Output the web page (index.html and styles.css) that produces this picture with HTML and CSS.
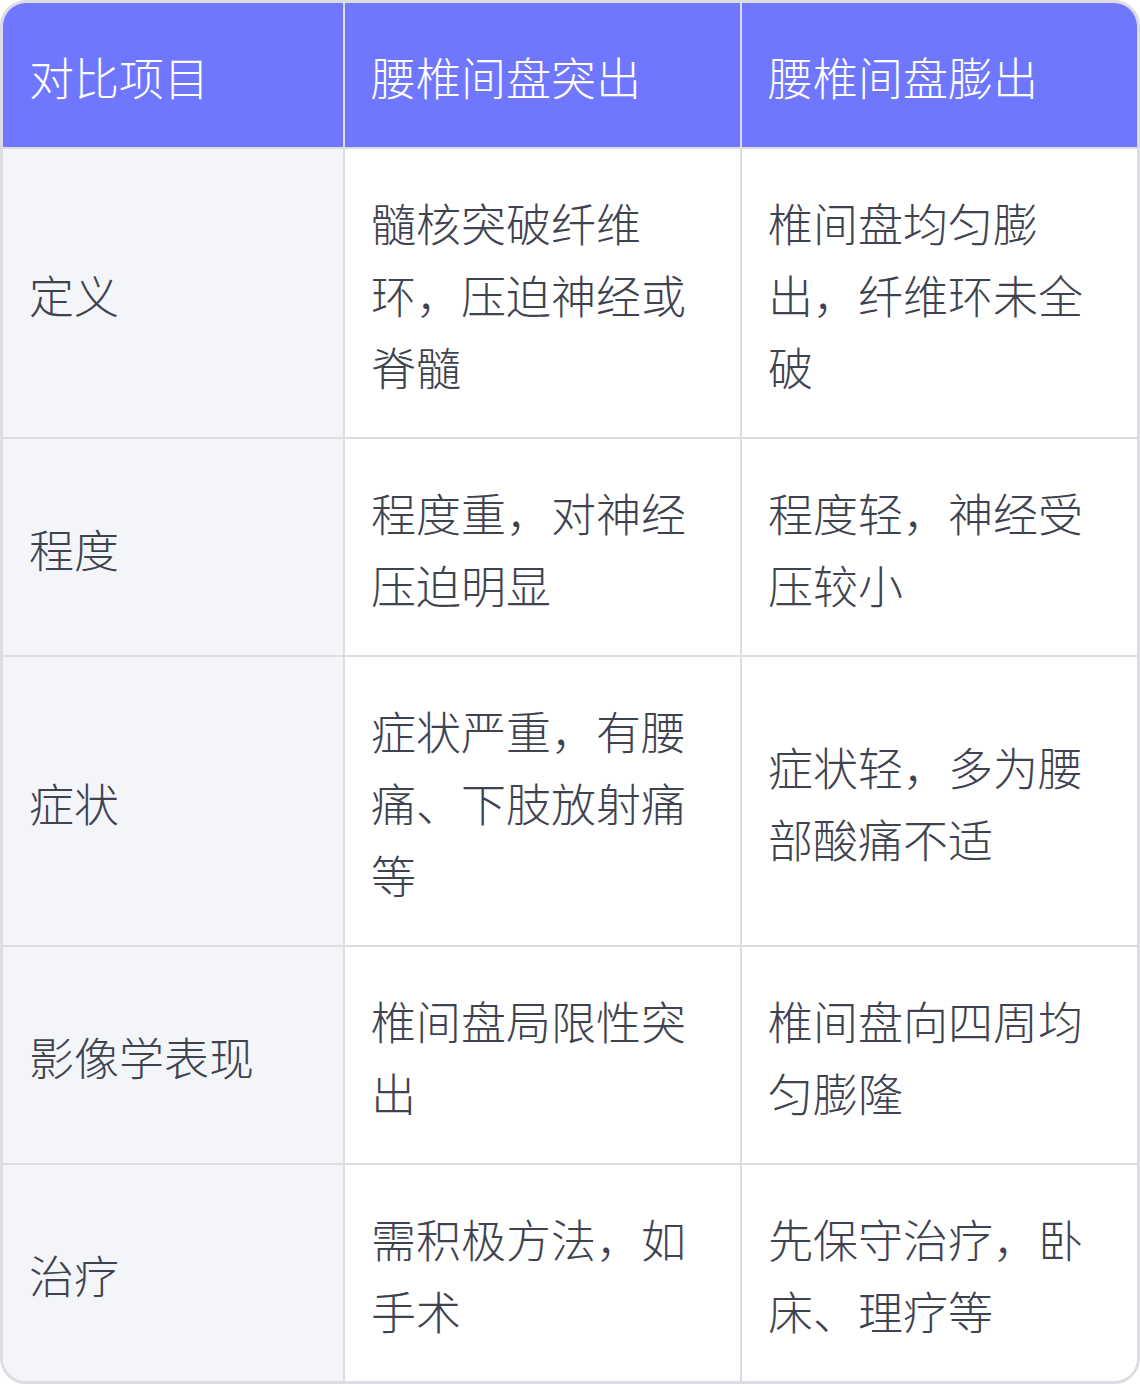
FILE: index.html
```html
<!DOCTYPE html>
<html lang="zh-CN">
<head>
<meta charset="utf-8">
<title>腰椎间盘突出与膨出对比</title>
<link rel="stylesheet" href="styles.css">
</head>
<body>
<div class="wrap">
  <table class="cmp">
    <colgroup>
      <col class="c1"><col class="c2"><col class="c3">
    </colgroup>
    <thead>
      <tr><th>对比项目</th><th>腰椎间盘突出</th><th>腰椎间盘膨出</th></tr>
    </thead>
    <tbody>
      <tr><td>定义</td><td>髓核突破纤维环，压迫神经或脊髓</td><td>椎间盘均匀膨出，纤维环未全破</td></tr>
      <tr><td>程度</td><td>程度重，对神经压迫明显</td><td>程度轻，神经受压较小</td></tr>
      <tr><td>症状</td><td>症状严重，有腰痛、下肢放射痛等</td><td>症状轻，多为腰部酸痛不适</td></tr>
      <tr><td>影像学表现</td><td>椎间盘局限性突出</td><td>椎间盘向四周均匀膨隆</td></tr>
      <tr><td>治疗</td><td>需积极方法，如手术</td><td>先保守治疗，卧床、理疗等</td></tr>
    </tbody>
  </table>
</div>
</body>
</html>
```
FILE: styles.css
```css
html, body {
  margin: 0;
  padding: 0;
  background: #ffffff;
}
body {
  font-family: "Noto Sans CJK SC", "Noto Sans", sans-serif;
}
.wrap {
  width: 1140px;
  box-sizing: border-box;
  border: 3px solid #dcdde2;
  border-radius: 26px;
  overflow: hidden;
}
.cmp {
  width: 100%;
  border-collapse: collapse;
  table-layout: fixed;
}
.c1 { width: 341px; }
.c2 { width: 397px; }
.c3 { width: 396px; }
.cmp th, .cmp td {
  padding: 38px 28px 34px 26px;
  font-size: 45px;
  line-height: 72px;
  text-align: left;
  vertical-align: middle;
  border: 2px solid #dcdde2;
  font-weight: 300;
}
.cmp tr > *:first-child { border-left: none; }
.cmp tr > *:last-child { border-right: none; }
.cmp thead th { border-top: none; }
.cmp tbody tr:last-child td { border-bottom: none; }
.cmp th {
  background: #7077ff;
  color: #ffffff;
}
.cmp td {
  color: #3f4350;
  background: #ffffff;
}
.cmp td:first-child {
  background: #f4f5f9;
}
```
